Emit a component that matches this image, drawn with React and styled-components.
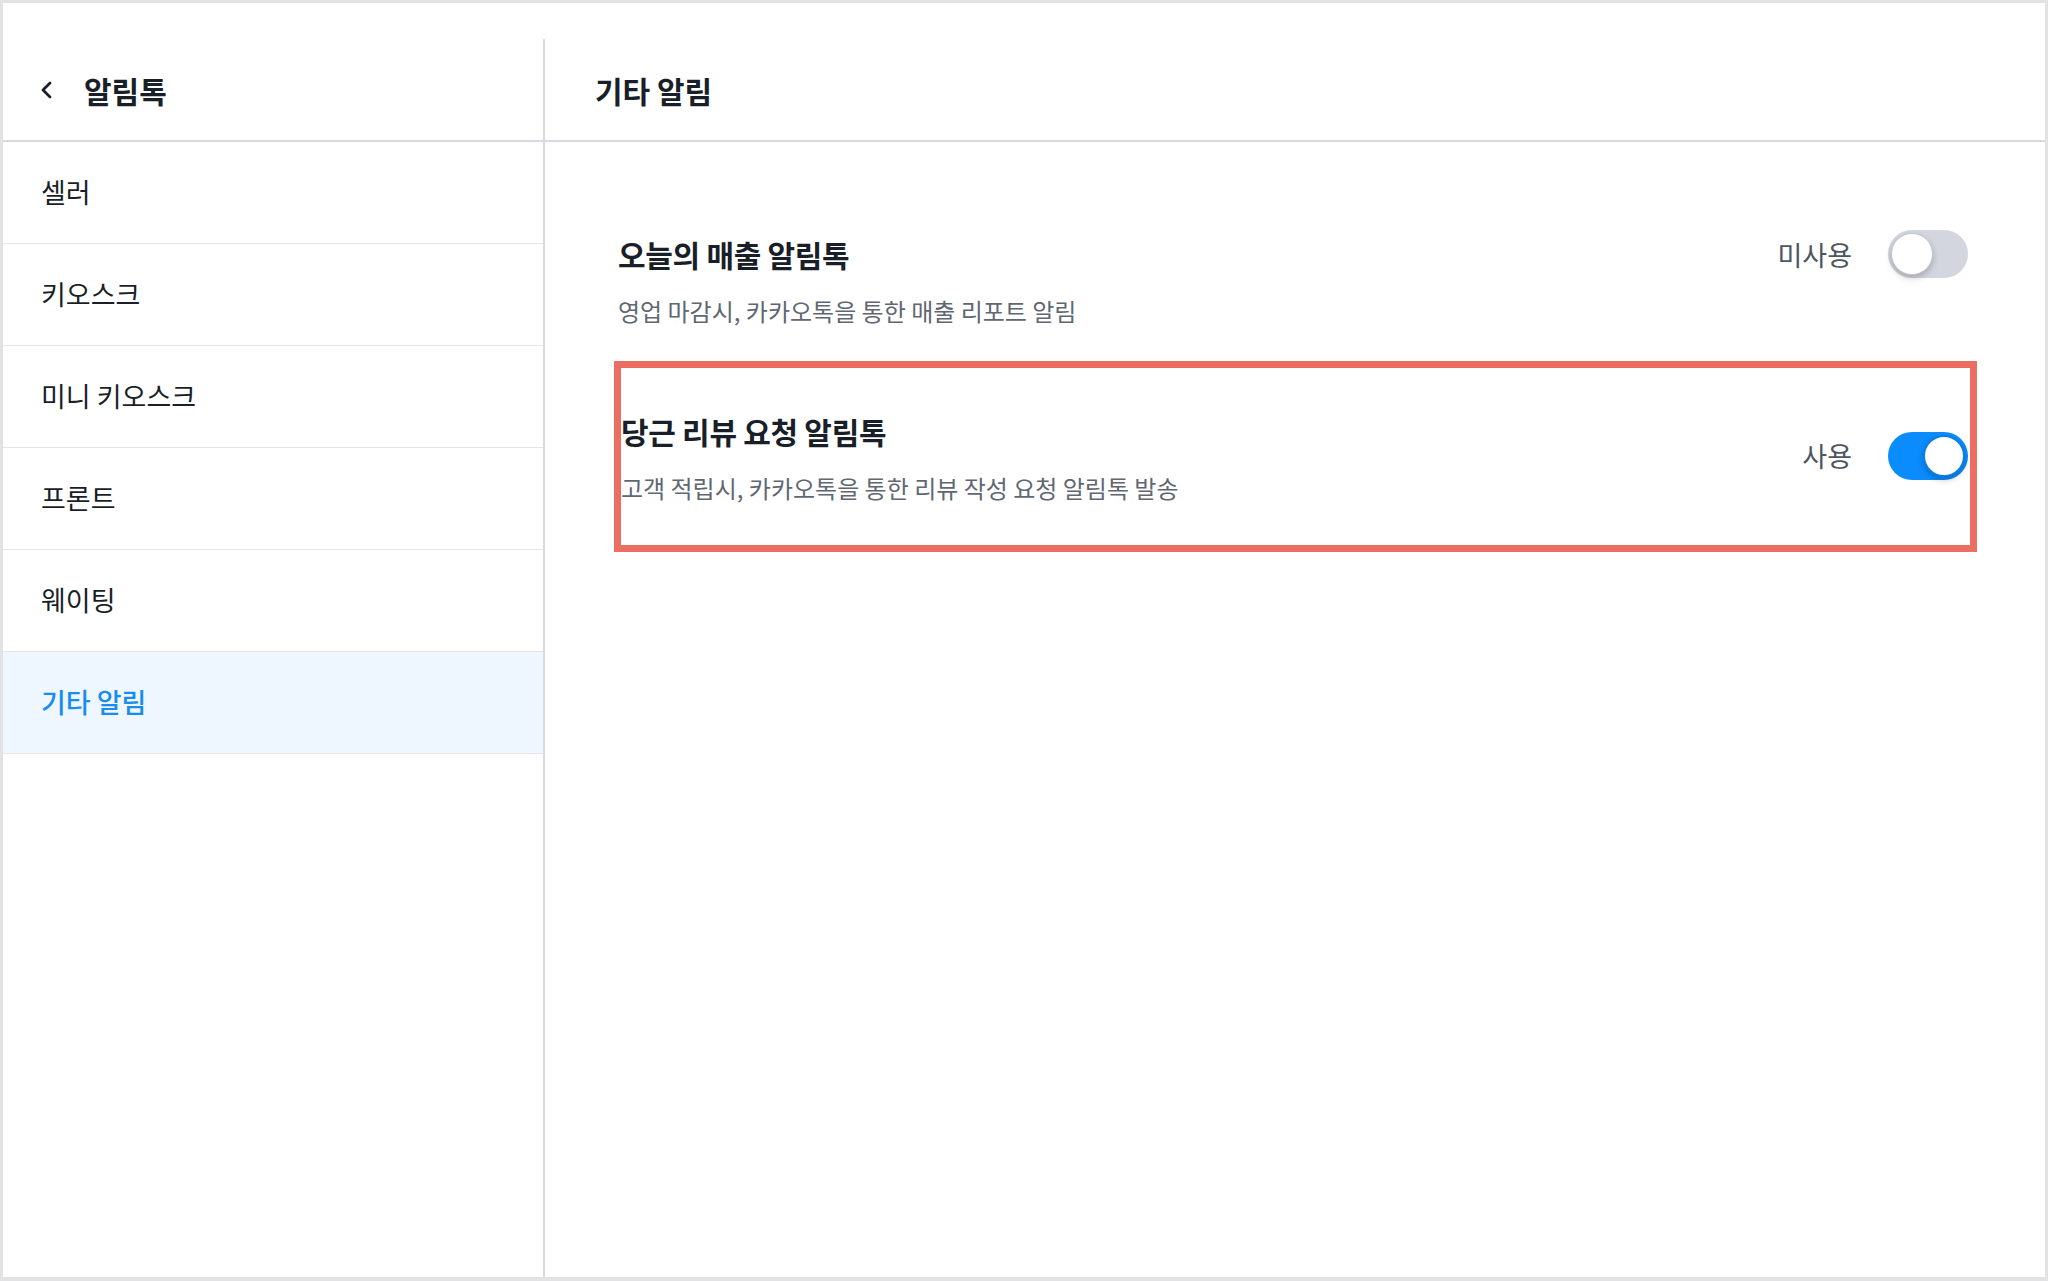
import React, { useState } from 'react';
import styled, { createGlobalStyle } from 'styled-components';

const GlobalStyle = createGlobalStyle`
  html, body {
    margin: 0;
    padding: 0;
    background: #ffffff;
  }
  body {
    font-family: 'Noto Sans CJK KR', 'Noto Sans', sans-serif;
    color: #191f28;
  }
`;

const menuItems = ['셀러', '키오스크', '미니 키오스크', '프론트', '웨이팅', '기타 알림'];

const notices = [
  {
    id: 'sales',
    title: '오늘의 매출 알림톡',
    desc: '영업 마감시, 카카오톡을 통한 매출 리포트 알림',
    on: false,
    highlight: false,
  },
  {
    id: 'review',
    title: '당근 리뷰 요청 알림톡',
    desc: '고객 적립시, 카카오톡을 통한 리뷰 작성 요청 알림톡 발송',
    on: true,
    highlight: true,
  },
];

const Frame = styled.div`
  box-sizing: border-box;
  width: 2048px;
  height: 1281px;
  border: 3px solid #e2e2e4;
  border-bottom-width: 4px;
  display: grid;
  grid-template-columns: 542px 1fr;
  background: #fff;
  overflow: hidden;
`;

const Sidebar = styled.aside`
  display: flex;
  flex-direction: column;
  border-right: 2px solid #d9d9e1;
  margin-top: 36px;
`;

const SideHeader = styled.div`
  box-sizing: border-box;
  display: flex;
  align-items: center;
  gap: 25px;
  padding-left: 32px;
  border-bottom: 2px solid #d9d9e1;
  margin-top: -36px;
  padding-top: 36px;
  height: 139px;
  margin-right: -2px;
`;

const BackButton = styled.button`
  border: 0;
  background: none;
  padding: 0;
  width: 24px;
  height: 28px;
  display: flex;
  align-items: center;
  justify-content: center;
  color: #191f28;
  cursor: pointer;
`;

const HeaderTitle = styled.h1`
  margin: 0;
  font-size: 30px;
  font-weight: 700;
  color: #191f28;
`;

const MenuItem = styled.div`
  height: 102px;
  box-sizing: border-box;
  display: flex;
  align-items: center;
  padding-left: 38px;
  padding-bottom: 2px;
  border-bottom: 1px solid #e6e6ea;
  font-size: 27px;
  font-weight: ${(p) => (p.$active ? 500 : 400)};
  color: ${(p) => (p.$active ? '#1a8cf0' : '#191f28')};
  background: ${(p) => (p.$active ? '#eef7ff' : '#fff')};
`;

const Main = styled.main`
  display: flex;
  flex-direction: column;
`;

const MainHeader = styled.div`
  height: 139px;
  box-sizing: border-box;
  padding-top: 36px;
  padding-left: 50px;
  display: flex;
  align-items: center;
  border-bottom: 2px solid #d9d9e1;
`;

const List = styled.div`
  display: flex;
  flex-direction: column;
  gap: 34px;
  padding: 88px 0 0 73px;
  width: 1350px;
`;

const Row = styled.div`
  display: flex;
  justify-content: space-between;
  align-items: ${(p) => (p.$highlight ? 'center' : 'flex-start')};
  ${(p) =>
    p.$highlight &&
    `
    border: 7px solid #ea6f62;
    margin: 0 -9px 0 -4px;
    padding: 39px 2px 41px 0;
  `}
`;

const Texts = styled.div`
  display: flex;
  flex-direction: column;
  gap: 17px;
`;

const RowTitle = styled.div`
  font-size: 30px;
  line-height: 48px;
  font-weight: 700;
  letter-spacing: -0.3px;
  color: #191f28;
`;

const RowDesc = styled.div`
  font-size: 24px;
  line-height: 32px;
  color: #5f6772;
`;

const Control = styled.div`
  display: flex;
  align-items: center;
  gap: 36px;
`;

const StateLabel = styled.span`
  font-size: 27px;
  color: #4e5661;
`;

const Track = styled.button`
  position: relative;
  width: 80px;
  height: 48px;
  border: 0;
  padding: 0;
  border-radius: 24px;
  background: ${(p) => (p.$on ? '#0a8cff' : '#d3d6de')};
  cursor: pointer;
`;

const Knob = styled.span`
  position: absolute;
  top: 3px;
  left: ${(p) => (p.$on ? '35px' : '3px')};
  width: 42px;
  height: 42px;
  box-sizing: border-box;
  border-radius: 50%;
  background: #fff;
  border: ${(p) => (p.$on ? '2px solid #0a7fe6' : '1px solid #c4c7cf')};
  box-shadow: 0 3px 6px rgba(0, 0, 0, 0.22);
`;

const Toggle = ({ on, onClick }) => (
  <Track $on={on} onClick={onClick}>
    <Knob $on={on} />
  </Track>
);

const App = () => {
  const [items, setItems] = useState(notices);
  const toggle = (id) =>
    setItems((prev) => prev.map((n) => (n.id === id ? { ...n, on: !n.on } : n)));

  return (
    <>
      <GlobalStyle />
      <Frame>
        <Sidebar>
          <SideHeader>
            <BackButton aria-label="back">
              <svg width="16" height="24" viewBox="0 0 16 24" fill="none">
                <polyline
                  points="11,5 4,12 11,19"
                  stroke="#191f28"
                  strokeWidth="2.8"
                  strokeLinecap="round"
                  strokeLinejoin="round"
                />
              </svg>
            </BackButton>
            <HeaderTitle>알림톡</HeaderTitle>
          </SideHeader>
          {menuItems.map((m) => (
            <MenuItem key={m} $active={m === '기타 알림'}>
              {m}
            </MenuItem>
          ))}
        </Sidebar>
        <Main>
          <MainHeader>
            <HeaderTitle>기타 알림</HeaderTitle>
          </MainHeader>
          <List>
            {items.map((n) => (
              <Row key={n.id} $highlight={n.highlight}>
                <Texts>
                  <RowTitle>{n.title}</RowTitle>
                  <RowDesc>{n.desc}</RowDesc>
                </Texts>
                <Control>
                  <StateLabel>{n.on ? '사용' : '미사용'}</StateLabel>
                  <Toggle on={n.on} onClick={() => toggle(n.id)} />
                </Control>
              </Row>
            ))}
          </List>
        </Main>
      </Frame>
    </>
  );
};

export default App;
